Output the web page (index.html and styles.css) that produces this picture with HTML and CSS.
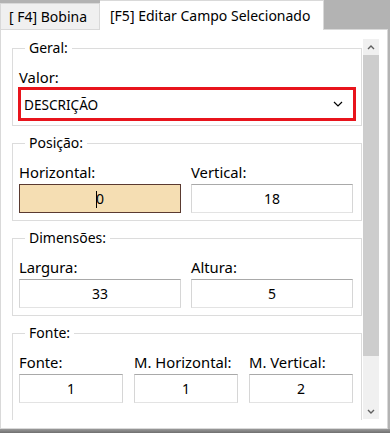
FILE: index.html
```html
<!DOCTYPE html>
<html lang="pt-BR">
<head>
  <meta charset="UTF-8" />
  <title>Editar Campo Selecionado</title>
  <link rel="stylesheet" href="styles.css">
</head>
<body>

<div class="tabs">
  <div class="tab">[ F4] Bobina</div>
  <div class="tab active">[F5] Editar Campo Selecionado</div>
</div>

<div class="panel">
  <div class="content">

    <fieldset class="group first">
      <legend>Geral:</legend>
      <label class="lbl">Valor:</label>
      <div class="select">
        <span>DESCRIÇÃO</span>
        <svg width="10" height="6" viewBox="0 0 10 6"><path d="M1 1l4 4 4-4" fill="none" stroke="#000" stroke-width="1.2"/></svg>
      </div>
    </fieldset>

    <fieldset class="group">
      <legend>Posição:</legend>
      <div class="row two">
        <div class="field">
          <label class="lbl">Horizontal:</label>
          <div class="box focus"><span class="caret"></span>0</div>
        </div>
        <div class="field">
          <label class="lbl">Vertical:</label>
          <div class="box">18</div>
        </div>
      </div>
    </fieldset>

    <fieldset class="group">
      <legend>Dimensões:</legend>
      <div class="row two">
        <div class="field">
          <label class="lbl">Largura:</label>
          <div class="box">33</div>
        </div>
        <div class="field">
          <label class="lbl">Altura:</label>
          <div class="box">5</div>
        </div>
      </div>
    </fieldset>

    <fieldset class="group">
      <legend>Fonte:</legend>
      <div class="row three">
        <div class="field">
          <label class="lbl">Fonte:</label>
          <div class="box">1</div>
        </div>
        <div class="field">
          <label class="lbl">M. Horizontal:</label>
          <div class="box">1</div>
        </div>
        <div class="field">
          <label class="lbl">M. Vertical:</label>
          <div class="box">2</div>
        </div>
      </div>
      <div class="row two next">
        <label class="lbl">Alinhamento:</label>
        <label class="lbl">Estilo da fonte:</label>
      </div>
    </fieldset>

  </div>

  <div class="scrollbar">
    <div class="arrow">
      <svg width="8" height="5" viewBox="0 0 8 5"><path d="M1 4l3-3 3 3" fill="none" stroke="#606060" stroke-width="1.4"/></svg>
    </div>
    <div class="thumb"></div>
    <div class="track"></div>
    <div class="arrow">
      <svg width="8" height="5" viewBox="0 0 8 5"><path d="M1 1l3 3 3-3" fill="none" stroke="#606060" stroke-width="1.4"/></svg>
    </div>
  </div>
</div>

<div class="bottom"></div>

</body>
</html>
```

FILE: styles.css
```css
body {
  margin: 0;
  width: 390px;
  height: 433px;
  overflow: hidden;
  background: #b3b3b3;
  font-family: "Noto Sans", "Open Sans", sans-serif;
  color: #000;
}

.tabs {
  display: flex;
  align-items: flex-end;
  height: 29px;
}

.tab {
  height: 26px;
  padding: 0 8px;
  line-height: 25px;
  font-size: 14px;
  background: #f0f0f0;
  border: 1px solid #d9d9d9;
  border-bottom: none;
  box-sizing: border-box;
  width: 100px;
}

.tab.active {
  position: relative;
  height: 30px;
  margin-bottom: -1px;
  width: 224px;
  padding: 0 10px;
  line-height: 29px;
  background: #fff;
  border-left: none;
}

.panel {
  display: flex;
  gap: 1px;
  width: 388px;
  height: 400px;
  box-sizing: border-box;
  padding: 9px 8px 7px 11px;
  background: #fff;
  border: 1px solid #d9d9d9;
}

.content {
  width: 350px;
  height: 381px;
  overflow: hidden;
}

.group {
  margin: 0 0 8px;
  padding: 0 8px 7px 6px;
  border: 1px solid #dcdcdc;
  min-width: 0;
}

.group.first {
  padding-bottom: 4px;
}

.group legend {
  margin-left: 6px;
  padding: 0 4px;
  font-size: 14px;
  line-height: 18px;
}

.lbl {
  display: block;
  margin-top: 10px;
  font-size: 14.8px;
  line-height: 20px;
}

.field .lbl {
  margin-bottom: 2px;
}

.select {
  display: flex;
  align-items: center;
  justify-content: space-between;
  height: 34px;
  margin: 0 -3px 0 -1px;
  padding: 0 10px 0 3px;
  box-sizing: border-box;
  border: 3px solid #e8141c;
  font-size: 13.6px;
}

.row {
  display: grid;
}

.row.two {
  grid-template-columns: 1fr 1fr;
  gap: 10px;
}

.row.three {
  grid-template-columns: 1fr 1fr 1fr;
  gap: 11px;
}

.row.next .lbl {
  margin-top: 13px;
}

.box {
  height: 29px;
  box-sizing: border-box;
  border: 1px solid;
  border-color: #a9a9a9 #d6d6d6 #e3e3e3 #d6d6d6;
  text-align: center;
  font-size: 14px;
  line-height: 27px;
}

.box.focus {
  background: #f5deb3;
  border-color: #5a3a30;
}

.caret {
  display: inline-block;
  width: 1px;
  height: 17px;
  margin-right: -1px;
  vertical-align: -4px;
  background: #000;
}

.scrollbar {
  display: flex;
  flex-direction: column;
  width: 16px;
  height: 380px;
  background: #f0f0f0;
}

.arrow {
  display: flex;
  align-items: center;
  justify-content: center;
  height: 16px;
  flex: none;
}

.thumb {
  height: 301px;
  background: #cdcdcd;
}

.track {
  flex: 1;
}

.bottom {
  height: 4px;
  background: linear-gradient(#9a9a9a, #6f6f6f);
}
```
